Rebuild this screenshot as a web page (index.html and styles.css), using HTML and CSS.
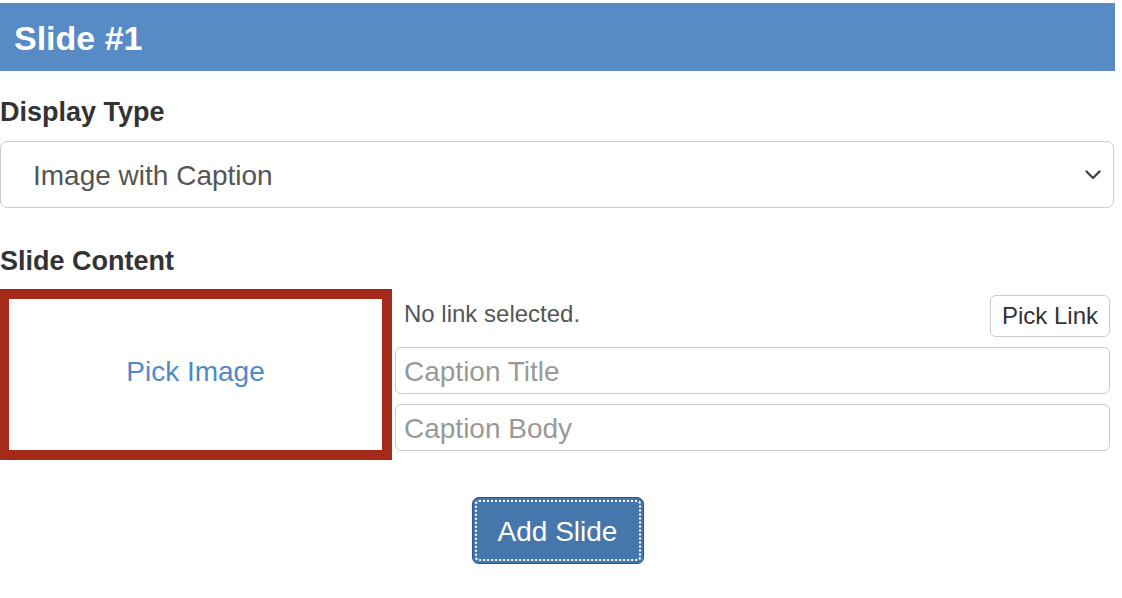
FILE: index.html
```html
<!DOCTYPE html>
<html>
<head>
<meta charset="utf-8">
<link rel="stylesheet" href="styles.css">
</head>
<body>
<div class="page">
  <div class="slide-header"><h2 class="slide-title">Slide #1</h2></div>

  <label class="field-label label-display">Display Type</label>
  <div class="select-box">
    <span class="select-value">Image with Caption</span>
    <svg class="chevron" width="16" height="10" viewBox="0 0 16 10"><path d="M1.5 1.5 L8 8 L14.5 1.5" fill="none" stroke="#444" stroke-width="2.4" stroke-linecap="round" stroke-linejoin="round"/></svg>
  </div>

  <label class="field-label label-content">Slide Content</label>
  <div class="content-row">
    <div class="image-picker"><a class="pick-image">Pick Image</a></div>
    <div class="fields">
      <div class="link-row">
        <span class="link-status">No link selected.</span>
        <button class="btn-link">Pick Link</button>
      </div>
      <input class="text-input" type="text" placeholder="Caption Title">
      <input class="text-input" type="text" placeholder="Caption Body">
    </div>
  </div>

  <div class="actions"><button class="btn-add">Add Slide</button></div>
</div>
</body>
</html>
```

FILE: styles.css
```css
html, body {
  margin: 0;
  padding: 0;
  background: #fff;
}
body {
  font-family: "Liberation Sans", Arial, Helvetica, sans-serif;
  color: #333;
}
.page {
  width: 1115px;
  padding-top: 3px;
  display: flex;
  flex-direction: column;
}
.slide-header {
  background: #568bc5;
  height: 68px;
  box-sizing: border-box;
  padding: 16px 14px 14px;
}
.slide-title {
  margin: 0;
  font-size: 34px;
  line-height: 38px;
  font-weight: bold;
  color: #fff;
}
.field-label {
  display: block;
  font-size: 27px;
  line-height: 36px;
  font-weight: bold;
  color: #333;
}
.label-display {
  margin-top: 23px;
}
.select-box {
  margin-top: 11px;
  width: 1114px;
  height: 67px;
  box-sizing: border-box;
  border: 1px solid #cbcbcb;
  border-radius: 7px;
  display: flex;
  align-items: center;
  justify-content: space-between;
  padding: 3px 12px 0 32px;
}
.select-value {
  font-size: 28px;
  color: #555;
}
.chevron {
  display: block;
  margin-top: -2px;
}
.label-content {
  margin-top: 35px;
}
.content-row {
  margin-top: 10px;
  display: flex;
  align-items: flex-start;
  gap: 3px;
}
.image-picker {
  width: 392px;
  height: 171px;
  box-sizing: border-box;
  border: 10px solid #a52a1a;
  border-left-width: 9px;
  display: flex;
  align-items: center;
  justify-content: center;
}
.pick-image {
  font-size: 28px;
  color: #5189c8;
  margin-top: -5px;
}
.fields {
  width: 715px;
  padding-top: 6px;
  display: flex;
  flex-direction: column;
  gap: 10px;
}
.link-row {
  display: flex;
  justify-content: space-between;
  align-items: flex-start;
}
.link-status {
  font-size: 24px;
  line-height: 30px;
  padding: 4px 0 0 9px;
  color: #555;
}
.btn-link {
  height: 42px;
  box-sizing: border-box;
  padding: 0 11px;
  border: 1px solid #ccc;
  border-radius: 6px;
  background: #fff;
  font-family: "Liberation Sans", Arial, sans-serif;
  font-size: 24px;
  color: #333;
  line-height: 40px;
}
.text-input {
  height: 47px;
  box-sizing: border-box;
  border: 1px solid #cbcbcb;
  border-radius: 6px;
  padding: 2px 8px 0;
  font-family: "Liberation Sans", Arial, sans-serif;
  font-size: 28px;
  color: #555;
  margin: 0;
}
.text-input::placeholder {
  color: #999;
}
.actions {
  margin-top: 37px;
  display: flex;
  justify-content: center;
}
.btn-add {
  width: 172px;
  height: 67px;
  box-sizing: border-box;
  background: #4576ac;
  border: 1px solid #2d5788;
  border-radius: 7px;
  outline: 2px dotted #fff;
  outline-offset: -5px;
  color: #fff;
  font-family: "Liberation Sans", Arial, sans-serif;
  font-size: 28px;
  box-shadow: 0 1px 2px rgba(0,0,0,0.2);
  padding: 2px 0 0;
}
```
